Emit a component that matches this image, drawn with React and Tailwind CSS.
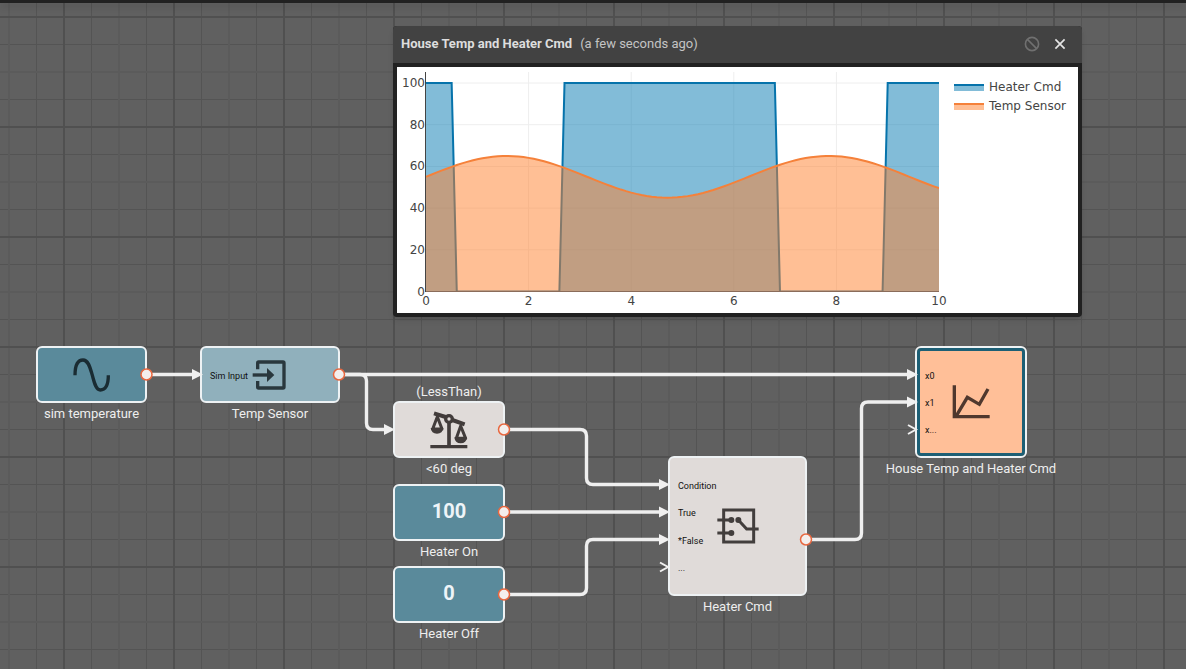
import clsx from 'clsx';

const nodes = [
    { id: 'sim', label: 'sim temperature', icon: 'sine', box: 'left-[36px] top-[346px] w-[111px] h-[57px]', color: 'bg-[#5a8a9b]' },
    { id: 'sensor', label: 'Temp Sensor', icon: 'input', ports: ['Sim Input'], box: 'left-[200px] top-[346px] w-[140px] h-[57px]', color: 'bg-[#90b0bc]' },
    { id: 'less', label: '<60 deg', caption: '(LessThan)', icon: 'balance', box: 'left-[393px] top-[401px] w-[112px] h-[57px]', color: 'bg-[#e0dbd9]' },
    { id: 'on', label: 'Heater On', value: '100', box: 'left-[393px] top-[484px] w-[112px] h-[57px]', color: 'bg-[#5a8a9b]' },
    { id: 'off', label: 'Heater Off', value: '0', box: 'left-[393px] top-[566px] w-[112px] h-[57px]', color: 'bg-[#5a8a9b]' },
    { id: 'cmd', label: 'Heater Cmd', icon: 'switch', ports: ['Condition', 'True', '*False', '...'], box: 'left-[668px] top-[456px] w-[139px] h-[140px]', color: 'bg-[#e0dbd9]' },
    { id: 'plot', label: 'House Temp and Heater Cmd', icon: 'chart', ports: ['x0', 'x1', 'x...'], selected: true, box: 'left-[915px] top-[346px] w-[112px] h-[112px]', color: 'bg-[#ffbf98]' }
];

const wires = [
    'M147 374.5 H194',
    'M339 374.5 H909',
    'M339 374.5 H360 Q366.5 374.5 366.5 381 V423 Q366.5 429.5 373 429.5 H387',
    'M504 429.5 H580 Q586.5 429.5 586.5 436 V478 Q586.5 484.5 593 484.5 H662',
    'M504 512 H662',
    'M504 594.5 H580 Q586.5 594.5 586.5 588 V546 Q586.5 539.5 593 539.5 H662',
    'M806 539.5 H855 Q861.5 539.5 861.5 533 V408.5 Q861.5 402 868 402 H909'
];

const arrows = [[203, 374.5], [918, 374.5], [395, 429.5], [670, 484.5], [670, 512], [670, 539.5], [918, 402]];
const openInputs = [[669, 567], [917, 429.5]];
const outputs = [[146.5, 374.5], [339, 374.5], [504, 429.5], [504, 512], [504, 594.5], [806, 539.5]];

// Chart scales
const sx = (v) => 29 + v * 51.3;
const sy = (v) => 224.5 - v * 2.085;

const samples = Array.from({ length: 101 }, (_, i) => i / 10);
const temp = samples.map((t) => [t, 55 + 10 * Math.sin(t)]);
const heater = temp.map(([t, v]) => [t, v < 60 ? 100 : 0]);

const toLine = (points) => 'M' + points.map(([x, y]) => `${sx(x).toFixed(2)} ${sy(y).toFixed(2)}`).join('L');
const toArea = (points) => `${toLine(points)}L${sx(10)} ${sy(0)}L${sx(0)} ${sy(0)}Z`;

const NodeIcon = ({ name }) => {
    if (name === 'sine') {
        return (
            <svg width="38" height="36" viewBox="159 64 114 108" fill="none" stroke="#1a2c33" strokeWidth="10">
                <path d="M165 119 C165 90 173 73 189 73 C206 73 211 99 217 119 C223 140 227 163 241 163 C257 163 265 146 265 119" />
            </svg>
        );
    }
    if (name === 'input') {
        return (
            <svg width="36" height="32" viewBox="184 70 108 96" fill="none" stroke="#29373d" strokeWidth="10">
                <path d="M201 101 V82 Q201 79 204 79 H277 Q280 79 280 82 V154 Q280 157 277 157 H204 Q201 157 201 154 V136" />
                <path d="M186 118 H232" />
                <path d="M229 97 L251 118 L229 139 Z" fill="#29373d" stroke="none" />
            </svg>
        );
    }
    if (name === 'balance') {
        return (
            <svg width="38" height="38" viewBox="150 91 114 114" fill="none" stroke="#423c3b" strokeWidth="9">
                <path d="M151 198 H262" strokeWidth="10" />
                <path d="M207 124 V198" strokeWidth="11" />
                <circle cx="207" cy="115" r="10" strokeWidth="10" />
                <path d="M162 98 L197 109 M217 118 L254 131" strokeWidth="12" />
                <path d="M172 108 L158 145 H186 Z M242 136 L229 173 H257 Z" strokeWidth="9" strokeLinejoin="round" />
                <path d="M152 142 H190 Q188 159 171 159 Q154 159 152 142 Z M223 170 H261 Q259 188 242 188 Q225 188 223 170 Z" fill="#423c3b" stroke="none" />
            </svg>
        );
    }
    if (name === 'switch') {
        return (
            <svg width="42" height="36" viewBox="230 187 126 108" fill="none" stroke="#423e3d" strokeWidth="9">
                <rect x="250" y="193" width="90" height="96" />
                <path d="M231 223 H273 M231 262 H273 M294 223 L319 250 H355" />
                <g fill="#423e3d" stroke="none">
                    <circle cx="273" cy="223" r="9" />
                    <circle cx="273" cy="262" r="9" />
                    <circle cx="294" cy="223" r="9" />
                </g>
            </svg>
        );
    }
    return (
        <svg width="38" height="34" viewBox="247 150 114 102" fill="none" stroke="#4f382e" strokeWidth="10">
            <path d="M254 151 V245 H360" />
            <path d="M259 244 L293 187 L329 208 L355 162" />
        </svg>
    );
};

const FlowNode = ({ node }) => (
    <div className={clsx('absolute rounded-md border-2 border-[#eef2f4]', node.box, node.color)}>
        {node.selected && <div className="absolute inset-0 rounded-sm border-3 border-[#1d5f75]" />}
        <div className="flex h-full items-center justify-center">
            {node.icon ? (
                <NodeIcon name={node.icon} />
            ) : (
                <span className="pb-1 text-[20px] leading-6 font-bold text-[#eef4f8]">{node.value}</span>
            )}
        </div>
        {node.ports && (
            <ul className="absolute inset-y-0 left-2 flex flex-col py-[13px] text-[9px] leading-3 text-[#111111]">
                {node.ports.map((port) => (
                    <li key={port} className="flex flex-1 items-center pt-0.5">{port}</li>
                ))}
            </ul>
        )}
        {node.caption && (
            <div className="absolute bottom-full left-1/2 -translate-x-1/2 pb-px text-[13px] leading-5 whitespace-nowrap">{node.caption}</div>
        )}
        <div className="absolute top-full left-1/2 -translate-x-1/2 pt-[3px] text-[13px] leading-5 whitespace-nowrap">{node.label}</div>
    </div>
);

const Wires = () => (
    <svg className="pointer-events-none absolute top-0 left-0" width="1100" height="640">
        <g fill="none" stroke="#efefef" strokeWidth="3.4">
            {wires.map((d) => <path key={d} d={d} />)}
        </g>
        {arrows.map(([x, y]) => (
            <path key={`${x}-${y}`} d={`M${x} ${y} l-11 -5.5 v11 Z`} fill="#f0f0f0" />
        ))}
        {openInputs.map(([x, y]) => (
            <path key={`${x}-${y}`} d={`M${x - 9} ${y - 4.5} L${x - 1} ${y} L${x - 9} ${y + 4.5}`} fill="none" stroke="#f0f0f0" strokeWidth="2" />
        ))}
        {outputs.map(([x, y]) => (
            <circle key={`${x}-${y}`} cx={x} cy={y} r="5.5" fill="#f4efed" stroke="#e8673f" strokeWidth="1.5" />
        ))}
    </svg>
);

const Grid = () => (
    <svg className="absolute inset-0 h-full w-full">
        <defs>
            <pattern id="grid" x="63" y="16" width="110" height="110" patternUnits="userSpaceOnUse">
                <path d="M28 0h1v110h-1z M83 0h1v110h-1z M0 28h110v1h-110z M0 83h110v1h-110z" fill="#545454" />
                <path d="M55 0h2v110h-2z M0 55h110v2h-110z" fill="#5b5b5b" />
                <path d="M0 0h2v110h-2z M0 0h110v2h-110z" fill="#505050" />
            </pattern>
        </defs>
        <rect width="100%" height="100%" fill="url(#grid)" />
    </svg>
);

const Chart = () => (
    <svg width="681" height="246" className="block bg-white font-['DejaVu_Sans',sans-serif] text-[12px]" fill="#444444">
        <defs>
            <clipPath id="plot-area">
                <rect x="29" y="5" width="513" height="219" />
            </clipPath>
        </defs>
        <g stroke="#eeeeee">
            {[2, 4, 6, 8].map((v) => <path key={v} d={`M${sx(v)} 5 V${sy(0)}`} />)}
            {[20, 40, 60, 80, 100].map((v) => <path key={v} d={`M29 ${sy(v)} H542`} />)}
        </g>
        <g clipPath="url(#plot-area)">
            <path d={toArea(heater)} fill="#0579b1" fillOpacity="0.5" />
            <path d={toLine(heater)} fill="none" stroke="#0673ab" strokeWidth="2" />
            <path d={toArea(temp)} fill="#ff7f2b" fillOpacity="0.5" />
            <path d={toLine(temp)} fill="none" stroke="#f5813a" strokeWidth="2" />
        </g>
        <path d={`M29 ${sy(0)} H542`} stroke="#8a6c5a" />
        <path d="M28.5 5 V225" stroke="#444444" />

        {[0, 20, 40, 60, 80, 100].map((v) => (
            <text key={v} x="28" y={sy(v) + 4} textAnchor="end">{v}</text>
        ))}
        {[0, 2, 4, 6, 8, 10].map((v) => (
            <text key={v} x={sx(v)} y="238" textAnchor="middle">{v}</text>
        ))}

        {/* Legend */}
        <path d="M557 17 h30 v7 h-30 Z" fill="#0579b1" fillOpacity="0.5" />
        <path d="M557 18 h30" stroke="#0673ab" strokeWidth="2" />
        <text x="592" y="24">Heater Cmd</text>
        <path d="M557 36 h30 v7 h-30 Z" fill="#ff7f2b" fillOpacity="0.5" />
        <path d="M557 37 h30" stroke="#f5813a" strokeWidth="2" />
        <text x="592" y="43">Temp Sensor</text>
    </svg>
);

const ChartWindow = () => (
    <section className="absolute top-[26px] left-[393px] rounded-sm bg-[#212121] shadow-md">
        <header className="flex h-[37px] items-center gap-2 rounded-t-sm bg-[#424242] px-2 pb-0.5 text-[#dddddd]">
            <h1 className="text-[13px] leading-5 font-bold">House Temp and Heater Cmd</h1>
            <span className="text-[13px] leading-5 text-[#c4c4c4]">(a few seconds ago)</span>
            <div className="ml-auto flex items-center gap-3 pr-[6px]">
                <button type="button" aria-label="Disable">
                    <svg width="16" height="16" viewBox="0 0 16 16" fill="none" stroke="#707070" strokeWidth="1.6">
                        <circle cx="8" cy="8" r="6.6" />
                        <path d="M3.4 3.4 L12.6 12.6" />
                    </svg>
                </button>
                <button type="button" aria-label="Close">
                    <svg width="16" height="16" viewBox="0 0 16 16" fill="none" stroke="#e4e4e4" strokeWidth="1.7">
                        <path d="M3.4 3.4 L12.6 12.6 M12.6 3.4 L3.4 12.6" />
                    </svg>
                </button>
            </div>
        </header>
        <div className="p-1">
            <Chart />
        </div>
    </section>
);

const App = () => {
    return (
        <main className="relative min-h-screen overflow-hidden bg-[#606060] font-['Roboto',sans-serif] text-[#eeeeee]">
            <Grid />
            <div className="relative h-[3px] bg-[#212121] shadow-md shadow-black/40" />
            {nodes.map((node) => <FlowNode key={node.id} node={node} />)}
            <Wires />
            <ChartWindow />
        </main>
    );
};

export default App;
